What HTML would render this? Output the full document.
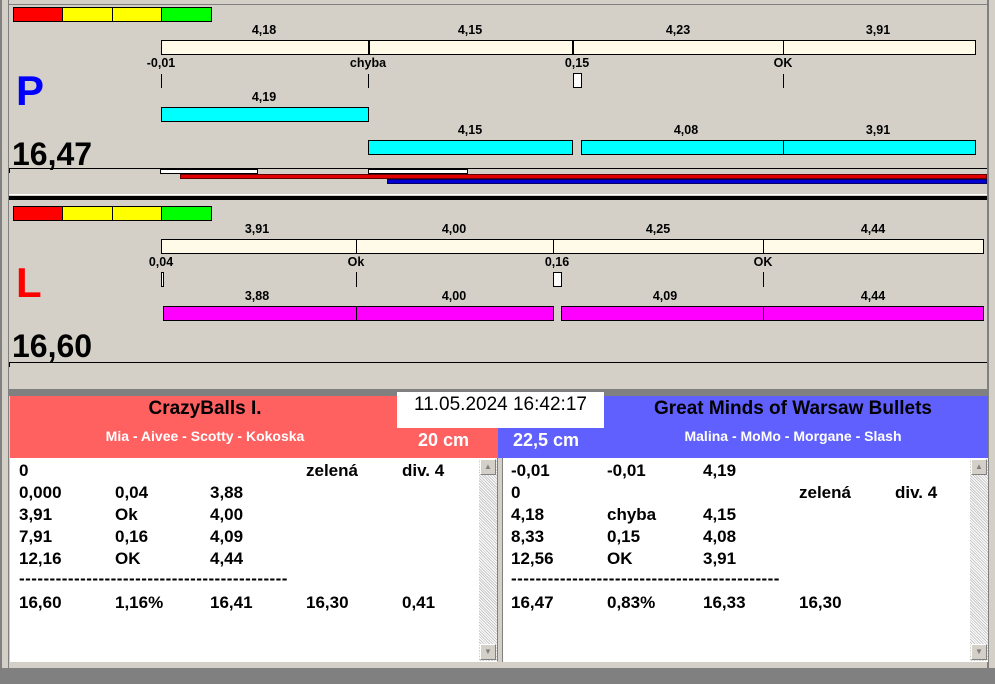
<!DOCTYPE html>
<html><head><meta charset="utf-8"><style>
*{margin:0;padding:0;box-sizing:border-box}
body{width:995px;height:684px;position:relative;overflow:hidden;background:#d4d0c8;font-family:"Liberation Sans",Arial,sans-serif;font-weight:bold}
div{position:absolute}
.lb{font-size:12.5px;color:#000;width:80px;text-align:center;line-height:14px}
.cr{background:#fffbe8;border:1px solid #000;height:15px}
.cy{background:#00ffff;border:1px solid #000;height:15px}
.mg{background:#ff00ff;border:1px solid #000;height:15px}
.vd{width:1px;background:#000}
.row{font-size:17px;line-height:22px}
.sb{background:#e8e8e8;background-image:repeating-linear-gradient(45deg,#fff 0 1px,#c8c8c8 1px 2px)}
.btn{background:#d4d0c8;border:1px solid;border-color:#fff #808080 #808080 #fff;width:16px;height:16px;font-size:8px;color:#808080;text-align:center;line-height:14px}
.dash{letter-spacing:0.45px}
</style></head><body>
<div style="left:0;top:0;width:9px;height:684px;background:#d4d0c8;border-left:2px solid #808080;border-right:1px solid #808080"></div>
<div style="left:987px;top:0;width:8px;height:684px;background:#d4d0c8;border-left:2px solid #808080"></div>
<div style="left:9px;top:4px;width:978px;height:1px;background:#808080"></div>

<div style="left:13px;top:7px;width:50px;height:15px;background:#f00;border:1px solid #000"></div>
<div style="left:62px;top:7px;width:51px;height:15px;background:#ff0;border:1px solid #000"></div>
<div style="left:112px;top:7px;width:50px;height:15px;background:#ff0;border:1px solid #000"></div>
<div style="left:161px;top:7px;width:51px;height:15px;background:#0f0;border:1px solid #000"></div>

<div class="lb" style="left:224px;top:23px">4,18</div>
<div class="lb" style="left:430px;top:23px">4,15</div>
<div class="lb" style="left:638px;top:23px">4,23</div>
<div class="lb" style="left:838px;top:23px">3,91</div>
<div class="cr" style="left:161px;top:40px;width:815px"></div>
<div class="vd" style="left:368px;top:40px;height:15px;width:2px"></div>
<div class="vd" style="left:572px;top:40px;height:15px;width:2px"></div>
<div class="vd" style="left:783px;top:40px;height:15px"></div>
<div class="lb" style="left:121px;top:56px">-0,01</div>
<div class="lb" style="left:328px;top:56px">chyba</div>
<div class="lb" style="left:537px;top:56px">0,15</div>
<div class="lb" style="left:743px;top:56px">OK</div>
<div class="vd" style="left:161px;top:74px;height:14px"></div>
<div class="vd" style="left:368px;top:74px;height:14px"></div>
<div class="vd" style="left:783px;top:74px;height:14px"></div>
<div style="left:573px;top:73px;width:9px;height:15px;background:#fff;border:1px solid #000"></div>
<div style="left:16px;top:66px;font-size:42px;color:#0000ff;line-height:50px">P</div>

<div class="lb" style="left:224px;top:90px">4,19</div>
<div class="cy" style="left:161px;top:107px;width:208px"></div>
<div class="lb" style="left:430px;top:123px">4,15</div>
<div class="lb" style="left:646px;top:123px">4,08</div>
<div class="lb" style="left:838px;top:123px">3,91</div>
<div class="cy" style="left:368px;top:140px;width:205px"></div>
<div class="cy" style="left:581px;top:140px;width:395px"></div>
<div class="vd" style="left:783px;top:140px;height:15px"></div>
<div style="left:12px;top:136px;font-size:32px;line-height:36px">16,47</div>

<div style="left:9px;top:168px;width:978px;height:1px;background:#000"></div>
<div style="left:9px;top:168px;width:1px;height:5px;background:#000"></div>
<div style="left:160px;top:169px;width:98px;height:5px;background:#fff;border:1px solid #000"></div>
<div style="left:368px;top:169px;width:100px;height:5px;background:#fff;border:1px solid #000"></div>
<div style="left:180px;top:174px;width:807px;height:5px;background:#e00000;border:1px solid #600"></div>
<div style="left:387px;top:179px;width:600px;height:5px;background:#0000d0;border:1px solid #006"></div>
<div style="left:9px;top:194px;width:978px;height:1px;background:#fff"></div>
<div style="left:9px;top:196px;width:978px;height:4px;background:#000"></div>

<div style="left:13px;top:206px;width:50px;height:15px;background:#f00;border:1px solid #000"></div>
<div style="left:62px;top:206px;width:51px;height:15px;background:#ff0;border:1px solid #000"></div>
<div style="left:112px;top:206px;width:50px;height:15px;background:#ff0;border:1px solid #000"></div>
<div style="left:161px;top:206px;width:51px;height:15px;background:#0f0;border:1px solid #000"></div>

<div class="lb" style="left:217px;top:222px">3,91</div>
<div class="lb" style="left:414px;top:222px">4,00</div>
<div class="lb" style="left:618px;top:222px">4,25</div>
<div class="lb" style="left:833px;top:222px">4,44</div>
<div class="cr" style="left:161px;top:239px;width:823px"></div>
<div class="vd" style="left:356px;top:239px;height:15px"></div>
<div class="vd" style="left:553px;top:239px;height:15px"></div>
<div class="vd" style="left:763px;top:239px;height:15px"></div>
<div class="lb" style="left:121px;top:255px">0,04</div>
<div class="lb" style="left:316px;top:255px">Ok</div>
<div class="lb" style="left:517px;top:255px">0,16</div>
<div class="lb" style="left:723px;top:255px">OK</div>
<div style="left:161px;top:272px;width:3px;height:15px;background:#fff;border:1px solid #000"></div>
<div class="vd" style="left:356px;top:272px;height:15px"></div>
<div style="left:553px;top:272px;width:9px;height:15px;background:#fff;border:1px solid #000"></div>
<div class="vd" style="left:763px;top:272px;height:15px"></div>
<div style="left:16px;top:258px;font-size:42px;color:#ff0000;line-height:50px">L</div>

<div class="lb" style="left:217px;top:289px">3,88</div>
<div class="lb" style="left:414px;top:289px">4,00</div>
<div class="lb" style="left:625px;top:289px">4,09</div>
<div class="lb" style="left:833px;top:289px">4,44</div>
<div class="mg" style="left:163px;top:306px;width:391px"></div>
<div class="vd" style="left:356px;top:306px;height:15px"></div>
<div class="mg" style="left:561px;top:306px;width:423px"></div>
<div class="vd" style="left:763px;top:306px;height:15px"></div>
<div style="left:12px;top:328px;font-size:32px;line-height:36px">16,60</div>
<div style="left:9px;top:362px;width:978px;height:1px;background:#000"></div>
<div style="left:9px;top:362px;width:1px;height:5px;background:#000"></div>
<div style="left:9px;top:389px;width:978px;height:7px;background:#808080"></div>

<div style="left:10px;top:396px;width:488px;height:62px;background:#ff6060"></div>
<div style="left:498px;top:396px;width:490px;height:62px;background:#6060ff"></div>
<div style="left:10px;top:398px;width:390px;text-align:center;font-size:19px;line-height:22px;color:#000">CrazyBalls I.</div>
<div style="left:10px;top:427px;width:390px;text-align:center;font-size:14px;line-height:18px;color:#fff">Mia - Aivee - Scotty - Kokoska</div>
<div style="left:397px;top:392px;width:207px;height:36px;background:#fff;font-weight:normal;font-size:19px;line-height:26px;text-align:center">11.05.2024 16:42:17</div>
<div style="left:418px;top:428px;font-size:18px;color:#fff;line-height:24px">20 cm</div>
<div style="left:513px;top:428px;font-size:18px;color:#fff;line-height:24px">22,5 cm</div>
<div style="left:598px;top:398px;width:390px;text-align:center;font-size:19px;line-height:22px;color:#000">Great Minds of Warsaw Bullets</div>
<div style="left:598px;top:427px;width:390px;text-align:center;font-size:14px;line-height:18px;color:#fff">Malina - MoMo - Morgane - Slash</div>

<div style="left:10px;top:458px;width:488px;height:204px;background:#fff;border-right:1px solid #808080;border-bottom:1px solid #fff"></div>
<div class="sb" style="left:479px;top:459px;width:18px;height:202px"></div>
<div class="btn" style="left:480px;top:459px">▲</div>
<div class="btn" style="left:480px;top:644px">▼</div>
<div style="left:502px;top:458px;width:486px;height:204px;background:#fff;border-left:1px solid #808080"></div>
<div class="sb" style="left:970px;top:459px;width:18px;height:202px"></div>
<div class="btn" style="left:971px;top:459px">▲</div>
<div class="btn" style="left:971px;top:644px">▼</div>
<div style="left:9px;top:662px;width:978px;height:6px;background:#d4d0c8"></div>
<div style="left:0;top:668px;width:995px;height:16px;background:#808080"></div>

<div class="row" style="left:19px;top:460px">0</div><div class="row" style="left:306px;top:460px">zelená</div><div class="row" style="left:402px;top:460px">div. 4</div>
<div class="row" style="left:19px;top:482px">0,000</div><div class="row" style="left:115px;top:482px">0,04</div><div class="row" style="left:210px;top:482px">3,88</div>
<div class="row" style="left:19px;top:504px">3,91</div><div class="row" style="left:115px;top:504px">Ok</div><div class="row" style="left:210px;top:504px">4,00</div>
<div class="row" style="left:19px;top:526px">7,91</div><div class="row" style="left:115px;top:526px">0,16</div><div class="row" style="left:210px;top:526px">4,09</div>
<div class="row" style="left:19px;top:548px">12,16</div><div class="row" style="left:115px;top:548px">OK</div><div class="row" style="left:210px;top:548px">4,44</div>
<div class="row dash" style="left:19px;top:568px">--------------------------------------------</div>
<div class="row" style="left:19px;top:592px">16,60</div><div class="row" style="left:115px;top:592px">1,16%</div><div class="row" style="left:210px;top:592px">16,41</div><div class="row" style="left:306px;top:592px">16,30</div><div class="row" style="left:402px;top:592px">0,41</div>

<div class="row" style="left:511px;top:460px">-0,01</div><div class="row" style="left:607px;top:460px">-0,01</div><div class="row" style="left:703px;top:460px">4,19</div>
<div class="row" style="left:511px;top:482px">0</div><div class="row" style="left:799px;top:482px">zelená</div><div class="row" style="left:895px;top:482px">div. 4</div>
<div class="row" style="left:511px;top:504px">4,18</div><div class="row" style="left:607px;top:504px">chyba</div><div class="row" style="left:703px;top:504px">4,15</div>
<div class="row" style="left:511px;top:526px">8,33</div><div class="row" style="left:607px;top:526px">0,15</div><div class="row" style="left:703px;top:526px">4,08</div>
<div class="row" style="left:511px;top:548px">12,56</div><div class="row" style="left:607px;top:548px">OK</div><div class="row" style="left:703px;top:548px">3,91</div>
<div class="row dash" style="left:511px;top:568px">--------------------------------------------</div>
<div class="row" style="left:511px;top:592px">16,47</div><div class="row" style="left:607px;top:592px">0,83%</div><div class="row" style="left:703px;top:592px">16,33</div><div class="row" style="left:799px;top:592px">16,30</div>
</body></html>
